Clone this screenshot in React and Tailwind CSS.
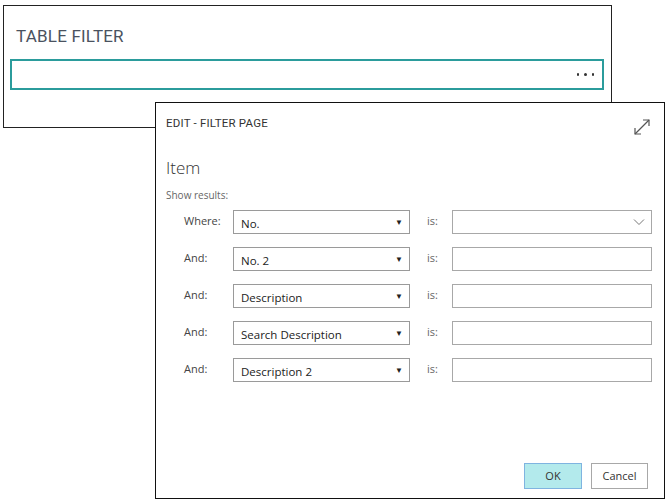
import React from "react";

const rows = [
  { label: "Where:", field: "No.", chevron: true },
  { label: "And:", field: "No. 2" },
  { label: "And:", field: "Description" },
  { label: "And:", field: "Search Description" },
  { label: "And:", field: "Description 2" },
];

function ExpandIcon() {
  return (
    <svg width="20" height="20" viewBox="0 0 20 20" fill="none" stroke="#555" strokeWidth="1.2">
      <path d="M3 17 L17 3" />
      <path d="M11 3 H17 V9" />
      <path d="M3 11 V17 H9" />
    </svg>
  );
}

export default function App() {
  return (
    <div className="relative w-[666px] h-[501px] bg-white overflow-hidden" style={{ fontFamily: '"Open Sans", "Noto Sans", sans-serif' }}>
      {/* Table filter panel */}
      <div className="ml-[3px] mt-[5px] w-[609px] h-[123px] border border-[#222] bg-white flex flex-col">
        <div className="pl-[12px] pt-[18px] text-[17px] leading-[24px] font-normal text-[#4a5260] tracking-[0.2px]" style={{ fontFamily: '"Roboto", "Noto Sans", sans-serif' }}>
          TABLE FILTER
        </div>
        <div className="mt-[11px] ml-[6px] w-[594px] h-[31px] border-2 border-[#2b9c9c] flex items-center justify-end pr-[8px]">
          <span className="flex gap-[5px]">
            <span className="w-[2.5px] h-[2.5px] bg-[#333] rounded-full" />
            <span className="w-[2.5px] h-[2.5px] bg-[#333] rounded-full" />
            <span className="w-[2.5px] h-[2.5px] bg-[#333] rounded-full" />
          </span>
        </div>
      </div>

      {/* Dialog */}
      <div className="absolute left-[155px] top-[102px] w-[510px] h-[397px] border border-[#111] bg-white flex flex-col">
        <div className="flex items-start justify-between pl-[10px] pr-[12px] pt-[12px]">
          <div className="text-[11.5px] leading-[16px] font-normal text-[#333] tracking-[0.2px]" style={{ fontFamily: '"Roboto", "Noto Sans", sans-serif' }}>
            EDIT - FILTER PAGE
          </div>
          <div className="mt-[2px]">
            <ExpandIcon />
          </div>
        </div>
        <div className="pl-[10px] mt-[20px] text-[17px] leading-[22px] font-light text-[#333]">Item</div>
        <div className="pl-[10px] mt-[9px] text-[10px] leading-[14px] text-[#666]">Show results:</div>
        <div className="flex flex-col gap-[13px] mt-[8px]">
          {rows.map((r, i) => (
            <div key={i} className="flex items-start h-[24px]">
              <div className="ml-[28px] w-[49px] pt-[3px] text-[11px] leading-[16px] text-[#444]">{r.label}</div>
              <div className="w-[177px] h-[24px] border border-[#9a9a9a] flex items-center justify-between pl-[7px] pr-[6px] text-[11.5px] text-[#222]">
                <span className="pt-[3px]">{r.field}</span>
                <span className="text-[8px] text-[#222]">▼</span>
              </div>
              <div className="ml-[17px] w-[25px] pt-[3px] text-[11px] leading-[16px] text-[#666]">is:</div>
              <div className="w-[200px] h-[24px] border border-[#a8a8a8] flex items-center justify-end pr-[6px]">
                {r.chevron && (
                  <svg width="12" height="8" viewBox="0 0 12 8" fill="none" stroke="#777" strokeWidth="1">
                    <path d="M1 1.5 L6 6.5 L11 1.5" />
                  </svg>
                )}
              </div>
            </div>
          ))}
        </div>
        <div className="mt-auto mb-[9px] flex justify-end gap-[9px] pr-[16px]">
          <button className="w-[58px] h-[26px] bg-[#b3eaec] border border-[#7fb4e0] text-[11px] text-[#333]">OK</button>
          <button className="w-[57px] h-[26px] bg-white border border-[#a8a8a8] text-[11px] text-[#333]">Cancel</button>
        </div>
      </div>
    </div>
  );
}
